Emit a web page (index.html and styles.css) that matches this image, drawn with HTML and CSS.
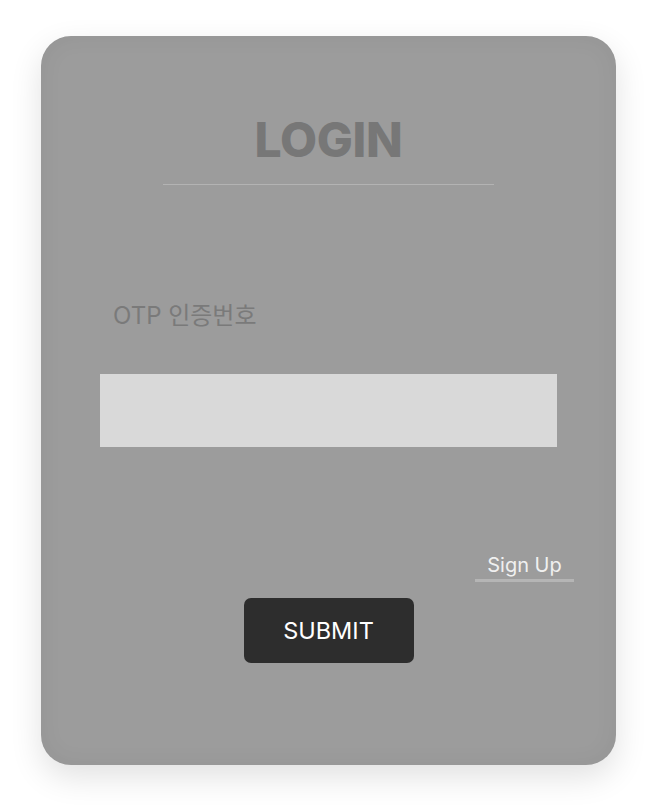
FILE: index.html
```html
<!DOCTYPE html>
<html lang="ko">
<head>
<meta charset="utf-8">
<title>Login</title>
<link rel="stylesheet" href="styles.css">
</head>
<body>
<main class="card">
  <h1 class="title">LOGIN</h1>
  <div class="divider"></div>
  <label class="label" for="otp">OTP 인증번호</label>
  <input class="otp-input" id="otp" type="text">
  <div class="signup-row">
    <a class="signup" href="#">Sign Up</a>
  </div>
  <button class="submit" type="button">SUBMIT</button>
</main>
</body>
</html>
```
FILE: styles.css
```css
html, body {
  margin: 0;
  padding: 0;
  background: #ffffff;
}

body {
  font-family: Inter, "Noto Sans", "Noto Sans CJK KR", sans-serif;
  min-height: 811px;
}

.card {
  box-sizing: border-box;
  width: 575px;
  height: 729px;
  margin: 36px auto 0;
  background: #9c9c9c;
  border-radius: 30px;
  box-shadow: 0 12px 32px rgba(0, 0, 0, 0.12), inset 0 0 24px rgba(0, 0, 0, 0.05);
  display: flex;
  flex-direction: column;
  align-items: center;
  padding-top: 75px;
}

.title {
  margin: 0;
  font-size: 48px;
  line-height: 58px;
  font-weight: 800;
  color: #777777;
  letter-spacing: -0.3px;
}

.divider {
  width: 331px;
  height: 1px;
  background: #b3b3b3;
  margin-top: 15px;
}

.label {
  align-self: flex-start;
  margin-left: 72px;
  margin-top: 115px;
  font-size: 24px;
  line-height: 32px;
  color: #7a7a7a;
}

.otp-input {
  box-sizing: border-box;
  width: 457px;
  height: 73px;
  margin-top: 42px;
  border: none;
  background: #d9d9d9;
  outline: none;
  padding: 0 12px;
  font-size: 20px;
}

.signup-row {
  align-self: stretch;
  display: flex;
  justify-content: flex-end;
  padding-right: 42px;
  margin-top: 105px;
}

.signup {
  width: 99px;
  text-align: center;
  font-size: 20px;
  line-height: 27px;
  color: #f0f0f0;
  text-decoration: none;
  border-bottom: 3px solid #b5b5b5;
}

.submit {
  width: 170px;
  height: 65px;
  margin-top: 16px;
  border: none;
  border-radius: 7px;
  background: #2d2d2d;
  color: #ffffff;
  font-family: Inter, "Noto Sans", sans-serif;
  font-size: 23.5px;
  cursor: pointer;
}
```
